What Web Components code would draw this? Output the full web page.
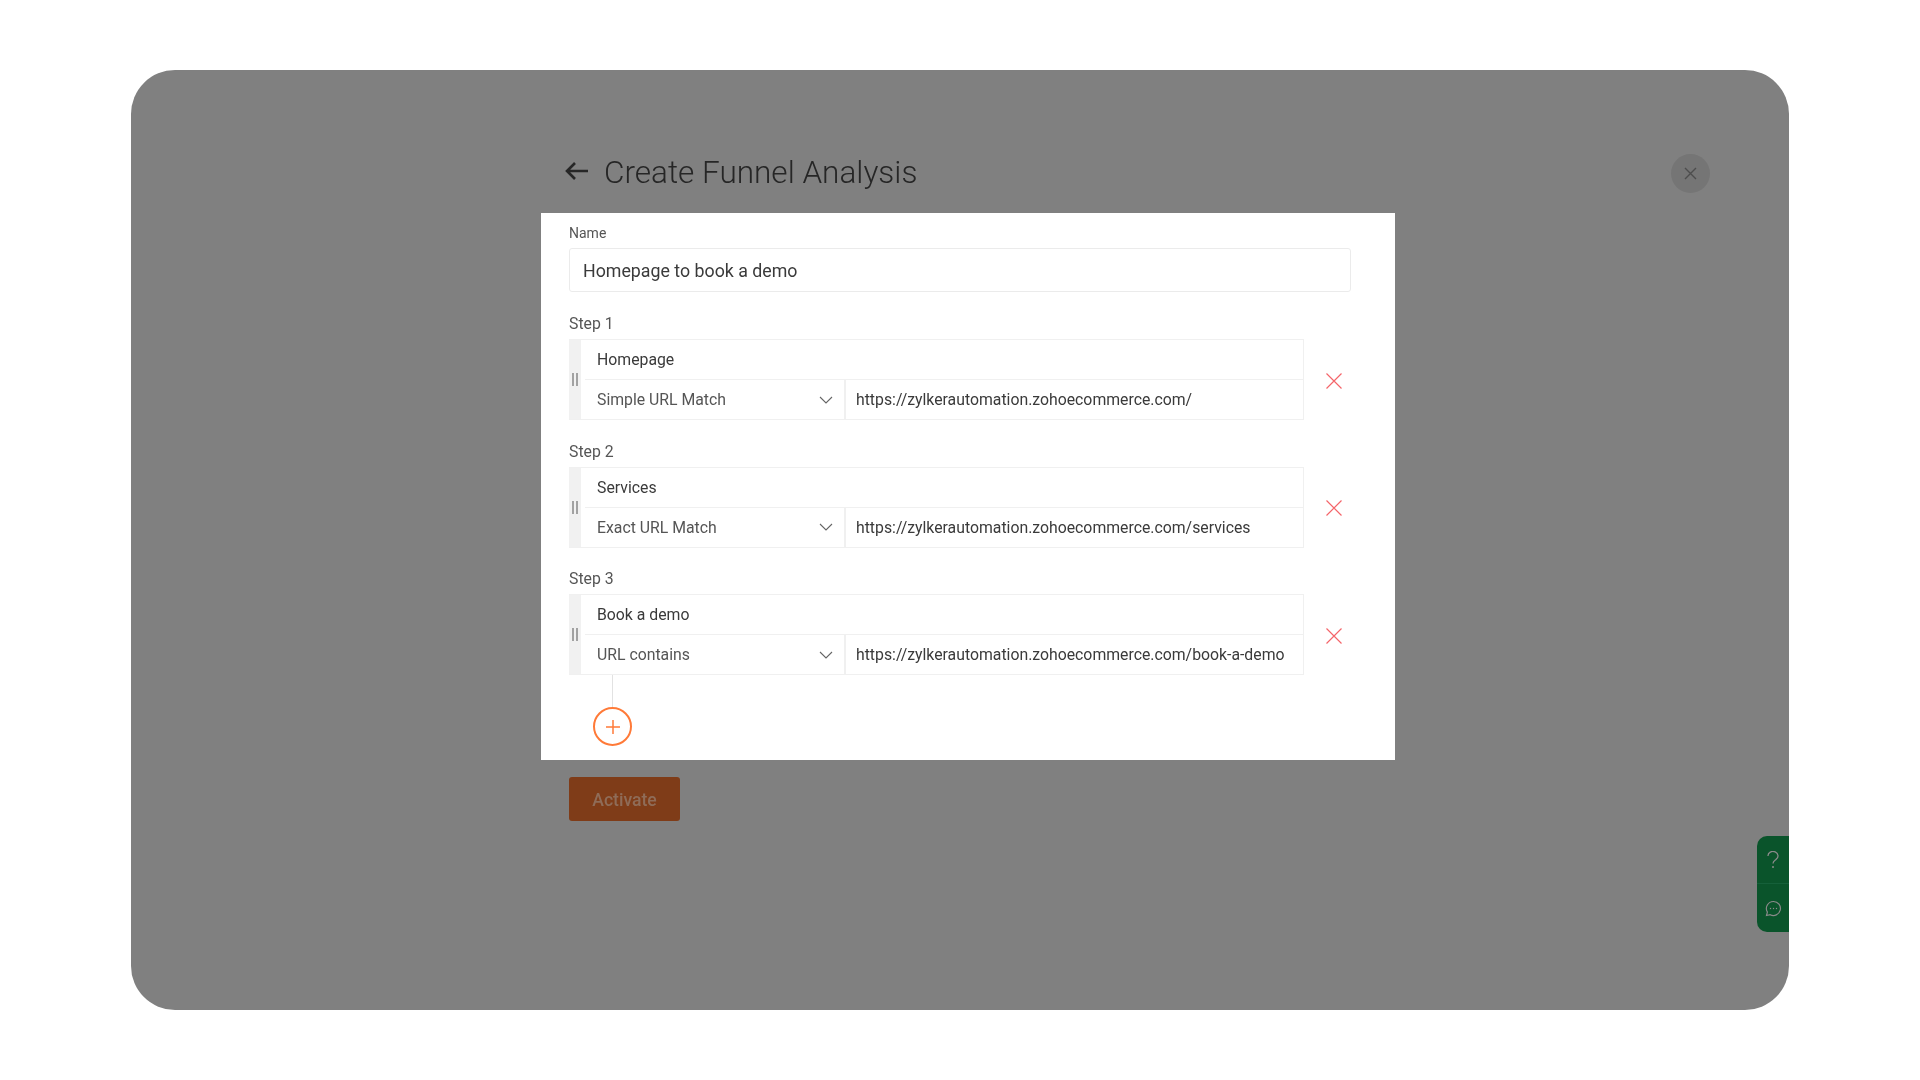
<!DOCTYPE html>
<html>
<head>
<meta charset="utf-8">
<title>Create Funnel Analysis</title>
<style>
  html, body { margin: 0; background: #fff; }
  body { width: 1920px; height: 1080px; padding: 70px 131px; box-sizing: border-box; font-family: Roboto, "Liberation Sans", sans-serif; overflow: hidden; }
</style>
</head>
<body>
<funnel-window>
  <funnel-step slot="steps" label="Step 1" name="Homepage" match="Simple URL Match" url="https://zylkerautomation.zohoecommerce.com/"></funnel-step>
  <funnel-step slot="steps" label="Step 2" name="Services" match="Exact URL Match" url="https://zylkerautomation.zohoecommerce.com/services"></funnel-step>
  <funnel-step slot="steps" label="Step 3" name="Book a demo" match="URL contains" url="https://zylkerautomation.zohoecommerce.com/book-a-demo"></funnel-step>
</funnel-window>
<script>
class FunnelStep extends HTMLElement {
    connectedCallback() {
        this.attachShadow({ mode: 'open' });
        this.shadowRoot.innerHTML = `
            <style>
                :host { display: block; height: 127.5px; }
                .label { height: 34px; padding-top: 9px; box-sizing: border-box; font-size: 15.8px; line-height: 19px; color: #555; }
                .row { display: flex; align-items: center; }
                .box { width: 735px; height: 81px; box-sizing: border-box; display: flex; border: 1px solid #f0f0f0; border-left: 0; }
                .handle { width: 12px; flex: none; background: #f1f1f1; display: flex; align-items: center; justify-content: center; }
                .fields { flex: 1; display: flex; flex-direction: column; }
                .name { height: 39px; display: flex; align-items: center; font-size: 15.8px; color: #3a3a3a; border-bottom: 1px solid #f0f0f0; margin-left: 4px; padding-left: 12px; }
                .bottom { flex: 1; display: flex; }
                .match { width: 261px; margin-left: 4px; padding: 0 11px 0 12px; box-sizing: border-box; display: flex; align-items: center; justify-content: space-between; font-size: 15.8px; color: #555; border-right: 2px solid #f0f0f0; }
                .url { flex: 1; padding-left: 10px; display: flex; align-items: center; font-size: 15.8px; color: #3a3a3a; white-space: nowrap; }
                .remove { margin: 2px 0 0 21px; display: block; }
            </style>
            <div class="label">${this.getAttribute('label')}</div>
            <div class="row">
                <div class="box">
                    <div class="handle">
                        <svg width="6" height="13" viewBox="0 0 6 13"><path d="M1 0v13M5 0v13" stroke="#808080" stroke-width="1.4" fill="none"/></svg>
                    </div>
                    <div class="fields">
                        <div class="name">${this.getAttribute('name')}</div>
                        <div class="bottom">
                            <div class="match">
                                <span>${this.getAttribute('match')}</span>
                                <svg width="14" height="8" viewBox="0 0 14 8"><path d="M1 1l6 6 6-6" stroke="#666" stroke-width="1.1" fill="none"/></svg>
                            </div>
                            <div class="url">${this.getAttribute('url')}</div>
                        </div>
                    </div>
                </div>
                <svg class="remove" width="18" height="18" viewBox="0 0 18 18"><path d="M1.5 1.5l15 15M16.5 1.5l-15 15" stroke="#f4656a" stroke-width="1.2" fill="none"/></svg>
            </div>
        `;
    }
}

class FunnelWindow extends HTMLElement {
    connectedCallback() {
        this.attachShadow({ mode: 'open' });
        this.shadowRoot.innerHTML = `
            <style>
                :host { display: block; position: relative; width: 1658px; height: 940px; box-sizing: border-box; padding-left: 410px; background: #808080; border-radius: 44px; overflow: hidden; filter: blur(.35px); }
                .head { height: 143px; box-sizing: border-box; padding: 0 0 0 24px; display: flex; align-items: flex-end; }
                .head-inner { display: flex; align-items: center; height: 48px; margin-bottom: 17px; }
                .head-inner svg { margin-top: -2px; }
                h1 { margin: 2px 0 0 15px; font-size: 31.5px; font-weight: 300; color: #262626; line-height: 48px; }
                .card { width: 854px; height: 547px; box-sizing: border-box; padding: 11px 0 0 28px; background: #fff; }
                .field-label { font-size: 14px; line-height: 18px; color: #555; }
                .name-input { width: 782px; height: 44px; margin-top: 6px; box-sizing: border-box; border: 1px solid #ebebeb; border-radius: 3px; padding-left: 13px; display: flex; align-items: center; font-size: 17.8px; color: #3a3a3a; }
                .steps { margin-top: 13px; }
                .add { display: flex; flex-direction: column; width: 39px; align-items: center; margin: -12.5px 0 0 24px; }
                .line { width: 1px; height: 32px; background: #e2e2e2; }
                .plus { width: 39px; height: 39px; box-sizing: border-box; border: 2px solid #ff7a38; border-radius: 50%; display: flex; align-items: center; justify-content: center; }
                .activate { width: 111px; height: 44px; margin: 17px 0 0 28px; padding-top: 1px; box-sizing: border-box; background: #7f3c18; border-radius: 3px; display: flex; align-items: center; justify-content: center; font-size: 17.6px; font-weight: 500; color: #8f6c58; }
                .close { position: absolute; left: 1540px; top: 84px; width: 39px; height: 39px; border-radius: 50%; background: #757575; display: flex; align-items: center; justify-content: center; }
                .side { position: absolute; right: 0; top: 766px; width: 32px; height: 96px; background: #0a542b; border-radius: 10px 0 0 10px; display: flex; flex-direction: column; }
                .side div { height: 48px; display: flex; align-items: center; justify-content: center; box-sizing: border-box; }
                .side div:first-child { border-bottom: 1px solid #15603a; }
            </style>
            <div class="head">
                <div class="head-inner">
                    <svg width="24" height="20" viewBox="0 0 24 20"><path d="M23 10H2M10 2l-8 8 8 8" stroke="#262626" stroke-width="2.6" fill="none"/></svg>
                    <h1>Create Funnel Analysis</h1>
                </div>
            </div>
            <div class="card">
                <div class="field-label">Name</div>
                <div class="name-input">Homepage to book a demo</div>
                <div class="steps"><slot name="steps"></slot></div>
                <div class="add">
                    <div class="line"></div>
                    <div class="plus"><svg width="16" height="16" viewBox="0 0 16 16"><path d="M8 1v14M1 8h14" stroke="#ff7a38" stroke-width="1.5" fill="none"/></svg></div>
                </div>
            </div>
            <div class="activate">Activate</div>
            <div class="close"><svg width="13" height="13" viewBox="0 0 13 13"><path d="M1 1l11 11M12 1L1 12" stroke="#4d4d4d" stroke-width="1.4" fill="none"/></svg></div>
            <div class="side">
                <div><svg width="14" height="18" viewBox="0 0 14 18"><path d="M2 5a5 4.400 0 1 1 8 3.400C8.500 9.600 7 10.300 7 12.500" stroke="#8a8a8a" stroke-width="1.3" fill="none"/><circle cx="7" cy="16" r="1" fill="#8a8a8a"/></svg></div>
                <div><svg width="17" height="17" viewBox="0 0 17 17"><path d="M8.500 1.500a7 7 0 1 1-3.300 13.200L1.500 15.500l.9-3.400A7 7 0 0 1 8.500 1.500z" stroke="#8a8a8a" stroke-width="1.200" fill="none"/><circle cx="5.500" cy="8.500" r=".7" fill="#8a8a8a"/><circle cx="8.500" cy="8.500" r=".7" fill="#8a8a8a"/><circle cx="11.500" cy="8.500" r=".7" fill="#8a8a8a"/></svg></div>
            </div>
        `;
    }
}

customElements.define('funnel-step', FunnelStep);
customElements.define('funnel-window', FunnelWindow);
</script>
</body>
</html>
